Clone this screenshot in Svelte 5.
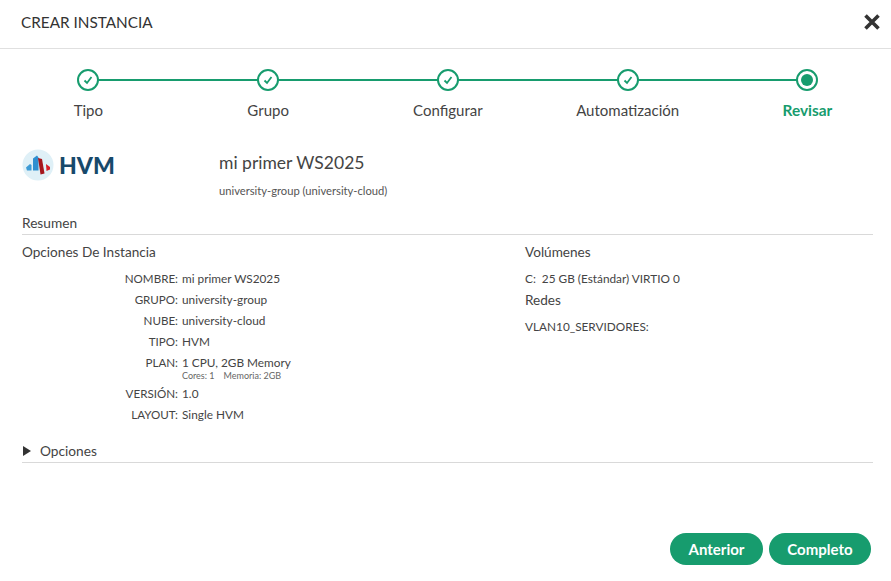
<script>
	const steps = ['Tipo', 'Grupo', 'Configurar', 'Automatización', 'Revisar'];
	const rows = [
		{ label: 'NOMBRE:', value: 'mi primer WS2025' },
		{ label: 'GRUPO:', value: 'university-group' },
		{ label: 'NUBE:', value: 'university-cloud' },
		{ label: 'TIPO:', value: 'HVM' },
		{ label: 'PLAN:', value: '1 CPU, 2GB Memory', sub: ['Cores: 1', 'Memoria: 2GB'] },
		{ label: 'VERSIÓN:', value: '1.0' },
		{ label: 'LAYOUT:', value: 'Single HVM' }
	];
</script>

<div class="modal">
	<header>
		<h1>CREAR INSTANCIA</h1>
		<svg class="close" width="18" height="18" viewBox="0 0 18 18">
			<path d="M2.5 2.5 15.5 15.5M15.5 2.5 2.5 15.5" stroke="#333" stroke-width="3.6" fill="none" />
		</svg>
	</header>

	<ol class="steps">
		{#each steps as step, i}
			<li class:current={i === steps.length - 1}>
				<span class="dot">
					{#if i < steps.length - 1}
						<svg width="10" height="10" viewBox="0 0 10 10">
							<path d="M1.5 5.5 4 8 8.5 2" stroke="#179c6e" stroke-width="1.8" fill="none" />
						</svg>
					{:else}
						<span class="inner"></span>
					{/if}
				</span>
				<span class="label">{step}</span>
			</li>
		{/each}
	</ol>

	<section class="head">
		<div class="logo">
			<svg width="32" height="32" viewBox="0 0 32 32">
				<circle cx="16" cy="16" r="15.5" fill="#dff0f7" />
				<path d="M4 18.5 8 15 9.5 16V21.5H5Z" fill="#3d9bd6" />
				<path d="M11 9.5 15 6.5 16.5 8.5V21.5H11Z" fill="#2f8fd0" />
				<path d="M16 9 20 10 22.5 24.5 18.5 25.5Z" fill="#a5161d" />
				<path d="M24 15 28 18V20.5L24.5 22Z" fill="#d8202a" />
			</svg>
			<span>HVM</span>
		</div>
		<div class="title">
			<h2>mi primer WS2025</h2>
			<p>university-group (university-cloud)</p>
		</div>
	</section>

	<h3 class="rule">Resumen</h3>

	<section class="summary">
		<div>
			<h4>Opciones De Instancia</h4>
			<dl>
				{#each rows as row}
					<dt>{row.label}</dt>
					<dd>
						{row.value}
						{#if row.sub}
							<small><span>{row.sub[0]}</span><span>{row.sub[1]}</span></small>
						{/if}
					</dd>
				{/each}
			</dl>
		</div>
		<div class="side">
			<h4>Volúmenes</h4>
			<p class="volume">C: &nbsp;25 GB (Estándar) VIRTIO 0</p>
			<h4 class="nets">Redes</h4>
			<p class="net">VLAN10_SERVIDORES:</p>
		</div>
	</section>

	<h3 class="rule options"><span class="arrow"></span>Opciones</h3>

	<footer>
		<button>Anterior</button>
		<button class="wide">Completo</button>
	</footer>
</div>

<style>
	:global(body) {
		background: #fff;
	}

	.modal {
		width: 891px;
		height: 581px;
		overflow: hidden;
		font-family: Lato, 'Open Sans', sans-serif;
		color: #444;
		display: flex;
		flex-direction: column;
	}

	header {
		height: 49px;
		box-sizing: border-box;
		border-bottom: 1px solid #e0e0e0;
		display: flex;
		justify-content: space-between;
		align-items: center;
		padding: 0 10px 5px 21px;
		flex: none;
	}

	h1 {
		margin: 0;
		font-size: 15.3px;
		font-weight: 400;
		color: #333;
	}

	.steps {
		list-style: none;
		margin: 20px 0 0 -1.5px;
		padding: 0;
		display: grid;
		grid-template-columns: repeat(5, 179.75px);
	}

	.steps li {
		position: relative;
		display: flex;
		flex-direction: column;
		align-items: center;
		height: 72px;
	}

	.steps li:not(:last-child)::after {
		content: '';
		position: absolute;
		left: 50%;
		top: 10px;
		width: 179.75px;
		height: 2px;
		background: #179c6e;
	}

	.dot {
		position: relative;
		z-index: 1;
		width: 22px;
		height: 22px;
		box-sizing: border-box;
		border: 2px solid #179c6e;
		border-radius: 50%;
		background: #fff;
		display: flex;
		align-items: center;
		justify-content: center;
	}

	.inner {
		width: 12px;
		height: 12px;
		border-radius: 50%;
		background: #179c6e;
	}

	.label {
		margin-top: 10px;
		font-size: 15px;
		line-height: 18px;
	}

	.current .label {
		color: #179c6e;
		font-weight: 700;
		font-size: 15.4px;
	}

	.head {
		display: flex;
		padding-left: 22px;
		margin-top: 10px;
	}

	.logo {
		width: 197px;
		height: 32px;
		margin-top: -2px;
		display: flex;
		align-items: center;
		gap: 5px;
		font-size: 23px;
		font-weight: 900;
		color: #17496b;
	}

	h2 {
		margin: 0;
		font-size: 17.5px;
		line-height: 24px;
		font-weight: 400;
		color: #444;
	}

	.title p {
		margin: 9px 0 0;
		font-size: 11.2px;
		line-height: 14px;
		color: #555;
	}

	.rule {
		margin: 0 18px 0 22px;
		border-bottom: 1px solid #d9d9d9;
		font-size: 13.7px;
		font-weight: 400;
		line-height: 18px;
		padding-bottom: 2px;
	}

	h3:not(.options) {
		margin-top: 16px;
	}

	.summary {
		display: flex;
		padding-left: 22px;
		margin-top: 8px;
	}

	.summary > div:first-child {
		width: 503px;
	}

	h4 {
		margin: 0;
		font-size: 13.6px;
		font-weight: 400;
		line-height: 18px;
	}

	dl {
		margin: 10px 0 0;
		display: grid;
		grid-template-columns: 156px 1fr;
		column-gap: 4px;
		row-gap: 6px;
		font-size: 11.8px;
		line-height: 15px;
	}

	dt {
		text-align: right;
		font-size: 11.6px;
	}

	dd {
		margin: 0;
	}

	small {
		display: flex;
		gap: 9px;
		font-size: 9px;
		line-height: 9px;
		color: #666;
		margin-top: 1px;
		height: 9px;
	}

	.side p {
		margin: 0;
		font-size: 11.8px;
		line-height: 15px;
	}

	.volume {
		padding-top: 10px;
	}

	.nets {
		margin-top: 5px;
	}

	.net {
		padding-top: 10px;
	}

	.options {
		margin-top: 20px;
		display: flex;
		align-items: center;
	}

	.arrow {
		width: 0;
		height: 0;
		margin: 0 9px 0 1px;
		border-left: 8px solid #333;
		border-top: 5px solid transparent;
		border-bottom: 5px solid transparent;
	}

	footer {
		margin-top: 70px;
		padding-right: 20px;
		display: flex;
		justify-content: flex-end;
		gap: 6px;
	}

	button {
		width: 93px;
		height: 32px;
		border: none;
		border-radius: 16px;
		background: #179c6e;
		color: #fff;
		font-family: inherit;
		font-size: 15px;
		font-weight: 700;
		padding: 0;
	}

	.wide {
		width: 102px;
	}
</style>
